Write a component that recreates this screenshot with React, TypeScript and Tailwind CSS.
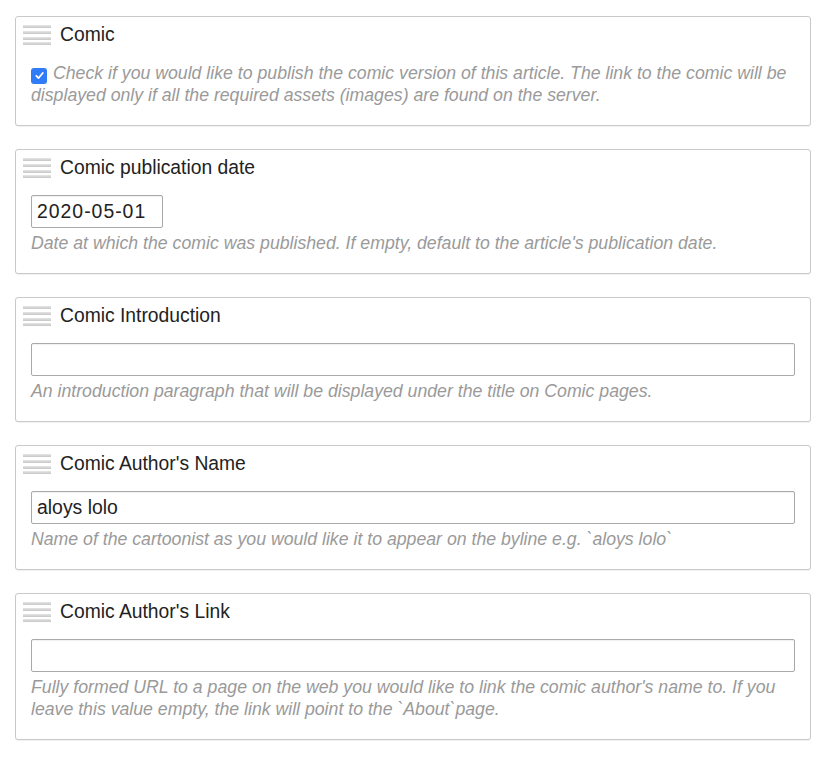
import React from "react";

const font = { fontFamily: '"Liberation Sans", Arial, Helvetica, sans-serif' };

function Handle() {
  return (
    <svg width="28" height="22" viewBox="0 0 28 22" className="shrink-0">
      <defs>
        <linearGradient id="bar" x1="0" y1="0" x2="0" y2="1">
          <stop offset="0" stopColor="#e6e6e6" />
          <stop offset="1" stopColor="#c6c6c6" />
        </linearGradient>
      </defs>
      {[1, 7, 13, 18].map((y) => (
        <rect key={y} x="0" y={y} width="28" height="3" fill="url(#bar)" />
      ))}
    </svg>
  );
}

function Card({ title, children }: { title: string; children: React.ReactNode }) {
  return (
    <div className="rounded-[3px] border border-[#c9c9c9] bg-white pl-[15px] pr-[15px] pt-[7px] pb-[19px] shadow-[0_1px_1px_rgba(0,0,0,0.06)]">
      <div className="-ml-[8px] flex h-[22px] items-center gap-[9px]">
        <Handle />
        <span className="whitespace-nowrap text-[19.3px] leading-[22px] text-[#222]">{title}</span>
      </div>
      <div className="mt-[16px]">{children}</div>
    </div>
  );
}

function Help({ children }: { children: React.ReactNode }) {
  return <p className="text-[17.7px] italic leading-[22px] text-[#9a9a9a]">{children}</p>;
}

function Field({ value, className }: { value: string; className: string }) {
  return (
    <div
      className={`flex h-[33px] items-center rounded-[2px] border border-[#a9a9a9] bg-white px-[5px] text-[19.4px] text-[#222] shadow-[inset_0_1px_1px_rgba(0,0,0,0.06)] ${className}`}
    >
      {value}
    </div>
  );
}

export default function App() {
  return (
    <div className="min-h-[757px] bg-white pt-[16px] pl-[15px] pr-[17px]" style={font}>
      <div className="flex w-[796px] flex-col gap-[23px]">
        <Card title="Comic">
          <Help>
            <span className="relative top-[2px] mr-[6px] inline-flex h-[16px] w-[16px] items-center justify-center rounded-[3px] bg-[#2f7cf6] align-baseline">
              <svg width="11" height="11" viewBox="0 0 12 12">
                <path d="M2.5 6.3 L5 8.8 L9.6 3.2" fill="none" stroke="#fff" strokeWidth="1.9" strokeLinecap="round" strokeLinejoin="round" />
              </svg>
            </span>
            Check if you would like to publish the comic version of this article. The link to the comic will be displayed only if all the required assets (images) are found on the server.
          </Help>
        </Card>

        <Card title="Comic publication date">
          <Field value="2020-05-01" className="w-[132px] tracking-[1px]" />
          <div className="mt-[4px]">
            <Help>Date at which the comic was published. If empty, default to the article's publication date.</Help>
          </div>
        </Card>

        <Card title="Comic Introduction">
          <Field value="" className="w-full" />
          <div className="mt-[4px]">
            <Help>An introduction paragraph that will be displayed under the title on Comic pages.</Help>
          </div>
        </Card>

        <Card title="Comic Author's Name">
          <Field value="aloys lolo" className="w-full" />
          <div className="mt-[4px]">
            <Help>Name of the cartoonist as you would like it to appear on the byline e.g. `aloys lolo`</Help>
          </div>
        </Card>

        <Card title="Comic Author's Link">
          <Field value="" className="w-full" />
          <div className="mt-[4px]">
            <Help>
              Fully formed URL to a page on the web you would like to link the comic author's name to. If you leave this value empty, the link will point to the `About`page.
            </Help>
          </div>
        </Card>
      </div>
    </div>
  );
}
